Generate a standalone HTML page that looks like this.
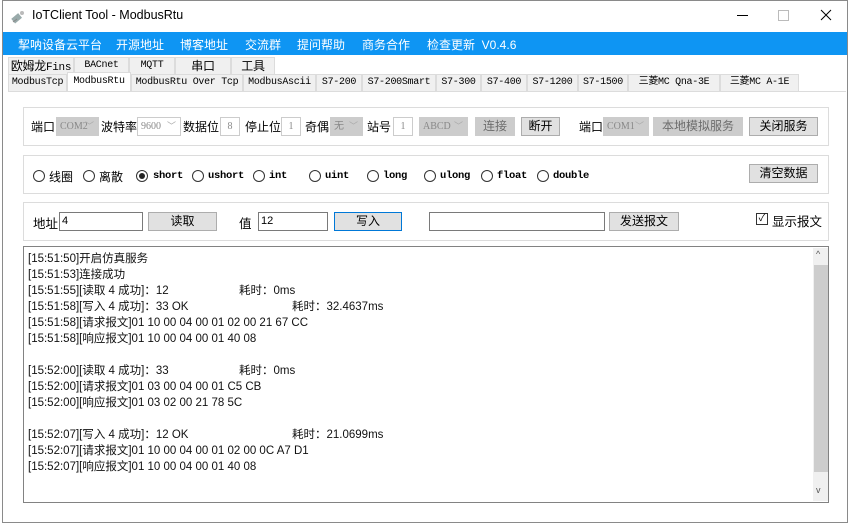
<!DOCTYPE html>
<html><head><meta charset="utf-8">
<style>
*{margin:0;padding:0;box-sizing:border-box}
body{width:850px;height:526px;background:#fff;position:relative;overflow:hidden;font-family:"Liberation Sans","Noto Sans CJK SC",sans-serif;font-size:12px;color:#000}
.a{position:absolute;white-space:nowrap}
.win{position:absolute;left:2px;top:0;width:846px;height:523px;border:1px solid #8a8a8a;background:#fff}
.menu{position:absolute;left:3px;top:32px;width:844px;height:23px;background:#0e95f3}
.menu span{position:absolute;top:4px;color:#fff;font-size:12px}
.tab{position:absolute;height:17px;border:1px solid #dcdcdc;border-bottom:none;background:#f0f0f0;font-family:"Liberation Mono","Noto Sans CJK SC",monospace;font-size:10px;text-align:center;line-height:16px;letter-spacing:-0.3px}
.tab.cn{font-family:"Liberation Sans","Noto Sans CJK SC",sans-serif;font-size:12px}
.grp{position:absolute;left:23px;width:806px;border:1px solid #dcdcdc;background:#fff}
.cb{position:absolute;height:19px;border:1px solid #ccc;background:#fff;font-family:"Liberation Serif",serif;font-size:10px;color:#888;line-height:17px;padding-left:3px}
.cb.g{background:#ccc;border-color:#ccc}
.cb i{position:absolute;right:4px;top:0;font-style:normal;color:#aaa;font-size:9px}
.btn{position:absolute;height:19px;border:1px solid #adadad;background:#e1e1e1;text-align:center;line-height:17px}
.btn.d{background:#ccc;border-color:#ccc;color:#6d6d6d}
.rad{position:absolute;width:12px;height:12px;border:1px solid #333;border-radius:50%;background:#fff}
.rl{position:absolute;font-family:"Liberation Mono",monospace;font-size:10.5px;font-weight:bold;letter-spacing:-0.3px}
.inp{position:absolute;height:19px;border:1px solid #7a7a7a;background:#fff;padding-left:2px;line-height:17px;font-size:11px}
.log{position:absolute;left:23px;top:246px;width:806px;height:257px;border:1px solid #828282;background:#fff}
.log div{position:absolute;left:4px;font-size:11.5px;color:#111;white-space:pre}
</style></head><body>
<div class="win"></div>
<svg class="a" style="left:10px;top:9px" width="16" height="16" viewBox="0 0 16 16"><rect x="2" y="6" width="9" height="6" transform="rotate(-40 7 9)" fill="#9aa" /><circle cx="12" cy="4" r="2" fill="#bbb"/><line x1="3" y1="13" x2="7" y2="10" stroke="#888"/></svg>
<div class="a" style="left:32px;top:8px;font-size:12.5px">IoTClient Tool - ModbusRtu</div>
<div class="a" style="left:737px;top:15px;width:11px;height:1px;background:#000"></div>
<div class="a" style="left:778px;top:10px;width:11px;height:11px;border:1px solid #bbb"></div>
<svg class="a" style="left:820px;top:9px" width="12" height="12"><path d="M1 1L11 11M11 1L1 11" stroke="#000" stroke-width="1"/></svg>
<div class="menu">
<span style="left:15px">挈呐设备云平台</span><span style="left:113px">开源地址</span><span style="left:177px">博客地址</span><span style="left:242px">交流群</span><span style="left:294px">提问帮助</span><span style="left:359px">商务合作</span><span style="left:424px">检查更新&nbsp; V0.4.6</span>
</div>
<div class="tab cn" style="left:8px;top:57px;width:66px">欧姆龙<span style="font-family:'Liberation Mono';font-size:11px">Fins</span></div>
<div class="tab" style="left:74px;top:57px;width:55px">BACnet</div>
<div class="tab" style="left:129px;top:57px;width:46px">MQTT</div>
<div class="tab cn" style="left:175px;top:57px;width:56px">串口</div>
<div class="tab cn" style="left:231px;top:57px;width:44px">工具</div>
<div class="tab" style="left:8px;top:74px;width:59px">ModbusTcp</div>
<div class="tab" style="left:131px;top:74px;width:112px">ModbusRtu Over Tcp</div>
<div class="tab" style="left:243px;top:74px;width:73px">ModbusAscii</div>
<div class="tab" style="left:316px;top:74px;width:46px">S7-200</div>
<div class="tab" style="left:362px;top:74px;width:74px">S7-200Smart</div>
<div class="tab" style="left:436px;top:74px;width:45px">S7-300</div>
<div class="tab" style="left:481px;top:74px;width:46px">S7-400</div>
<div class="tab" style="left:527px;top:74px;width:51px">S7-1200</div>
<div class="tab" style="left:578px;top:74px;width:50px">S7-1500</div>
<div class="tab" style="left:628px;top:74px;width:92px">三菱MC Qna-3E</div>
<div class="tab" style="left:720px;top:74px;width:79px">三菱MC A-1E</div>
<div class="tab" style="left:67px;top:72px;width:64px;height:20px;background:#fff;line-height:18px">ModbusRtu</div>
<div class="a" style="left:8px;top:91px;width:838px;height:1px;background:#dcdcdc"></div>
<div class="grp" style="top:107px;height:39px"></div>
<div class="a" style="left:31px;top:118px">端口</div>
<div class="cb g" style="left:56px;top:117px;width:43px">COM2<i>﹀</i></div>
<div class="a" style="left:101px;top:118px">波特率</div>
<div class="cb" style="left:137px;top:117px;width:44px">9600<i>﹀</i></div>
<div class="a" style="left:183px;top:118px">数据位</div>
<div class="cb" style="left:220px;top:117px;width:20px;text-align:center;padding:0">8</div>
<div class="a" style="left:245px;top:118px">停止位</div>
<div class="cb" style="left:281px;top:117px;width:20px;text-align:center;padding:0">1</div>
<div class="a" style="left:305px;top:118px">奇偶</div>
<div class="cb g" style="left:330px;top:117px;width:33px;font-family:'Liberation Sans','Noto Sans CJK SC'">无<i>﹀</i></div>
<div class="a" style="left:367px;top:118px">站号</div>
<div class="cb" style="left:393px;top:117px;width:20px;text-align:center;padding:0">1</div>
<div class="cb g" style="left:419px;top:117px;width:49px">ABCD<i>﹀</i></div>
<div class="btn d" style="left:475px;top:117px;width:40px">连接</div>
<div class="btn" style="left:521px;top:117px;width:39px">断开</div>
<div class="a" style="left:579px;top:118px">端口</div>
<div class="cb g" style="left:603px;top:117px;width:46px">COM1<i>﹀</i></div>
<div class="btn d" style="left:653px;top:117px;width:90px">本地模拟服务</div>
<div class="btn" style="left:749px;top:117px;width:69px">关闭服务</div>
<div class="grp" style="top:155px;height:39px"></div>
<div class="rad" style="left:33px;top:170px"></div><div class="a" style="left:49px;top:168px">线圈</div>
<div class="rad" style="left:83px;top:170px"></div><div class="a" style="left:99px;top:168px">离散</div>
<div class="rad" style="left:136px;top:170px"></div><div class="a" style="left:139px;top:173px;width:6px;height:6px;border-radius:50%;background:#222"></div><div class="rl" style="left:153px;top:170px">short</div>
<div class="rad" style="left:192px;top:170px"></div><div class="rl" style="left:208px;top:170px">ushort</div>
<div class="rad" style="left:253px;top:170px"></div><div class="rl" style="left:269px;top:170px">int</div>
<div class="rad" style="left:309px;top:170px"></div><div class="rl" style="left:325px;top:170px">uint</div>
<div class="rad" style="left:367px;top:170px"></div><div class="rl" style="left:383px;top:170px">long</div>
<div class="rad" style="left:424px;top:170px"></div><div class="rl" style="left:440px;top:170px">ulong</div>
<div class="rad" style="left:481px;top:170px"></div><div class="rl" style="left:497px;top:170px">float</div>
<div class="rad" style="left:537px;top:170px"></div><div class="rl" style="left:553px;top:170px">double</div>
<div class="btn" style="left:749px;top:164px;width:69px">清空数据</div>
<div class="grp" style="top:202px;height:39px"></div>
<div class="a" style="left:33px;top:213px;font-size:12.5px">地址</div>
<div class="inp" style="left:59px;top:212px;width:84px">4</div>
<div class="btn" style="left:148px;top:212px;width:69px">读取</div>
<div class="a" style="left:239px;top:213px;font-size:12.5px">值</div>
<div class="inp" style="left:258px;top:212px;width:70px">12</div>
<div class="btn" style="left:334px;top:212px;width:68px;border-color:#0078d7">写入</div>
<div class="inp" style="left:429px;top:212px;width:176px"></div>
<div class="btn" style="left:609px;top:212px;width:70px">发送报文</div>
<div class="a" style="left:756px;top:213px;width:12px;height:12px;border:1px solid #333;font-size:10px;line-height:10px;text-align:center">✓</div>
<div class="a" style="left:772px;top:211px;font-size:12.5px">显示报文</div>
<div class="log">
<div style="top:3px">[15:51:50]开启仿真服务</div>
<div style="top:19px">[15:51:53]连接成功</div>
<div style="top:35px">[15:51:55][读取 4 成功]：12</div><div style="top:35px;left:215px">耗时：0ms</div>
<div style="top:51px">[15:51:58][写入 4 成功]：33 OK</div><div style="top:51px;left:268px">耗时：32.4637ms</div>
<div style="top:67px">[15:51:58][请求报文]01 10 00 04 00 01 02 00 21 67 CC</div>
<div style="top:83px">[15:51:58][响应报文]01 10 00 04 00 01 40 08</div>
<div style="top:115px">[15:52:00][读取 4 成功]：33</div><div style="top:115px;left:215px">耗时：0ms</div>
<div style="top:131px">[15:52:00][请求报文]01 03 00 04 00 01 C5 CB</div>
<div style="top:147px">[15:52:00][响应报文]01 03 02 00 21 78 5C</div>
<div style="top:179px">[15:52:07][写入 4 成功]：12 OK</div><div style="top:179px;left:268px">耗时：21.0699ms</div>
<div style="top:195px">[15:52:07][请求报文]01 10 00 04 00 01 02 00 0C A7 D1</div>
<div style="top:211px">[15:52:07][响应报文]01 10 00 04 00 01 40 08</div>
<div style="left:789px;top:1px;width:15px;height:253px;background:#f0f0f0"></div>
<div style="left:790px;top:18px;width:14px;height:207px;background:#cdcdcd"></div>
<div style="left:792px;top:2px;font-size:9px;color:#555">^</div>
<div style="left:792px;top:238px;font-size:9px;color:#555">v</div>
</div>
</body></html>
